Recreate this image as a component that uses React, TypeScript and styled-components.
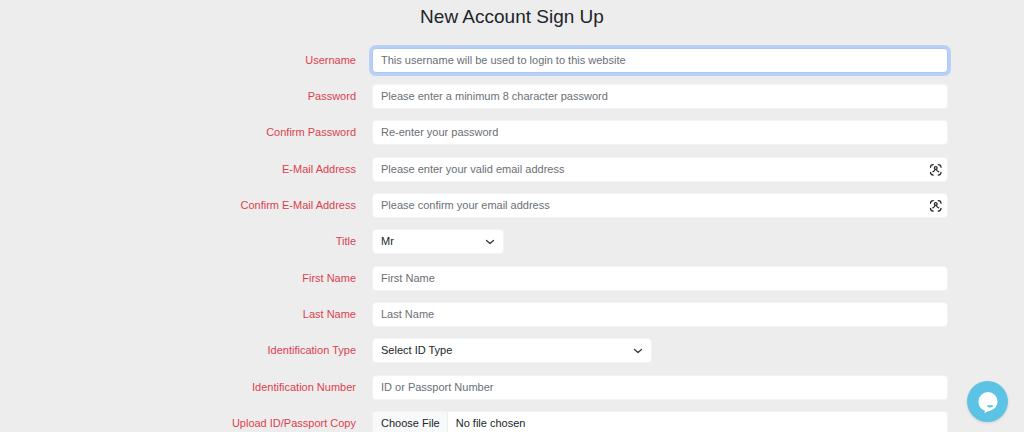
import React from "react";
import styled, { createGlobalStyle, css } from "styled-components";

const GlobalStyle = createGlobalStyle`
  *, *::before, *::after { box-sizing: border-box; }
  html { scrollbar-width: none; }
  body {
    margin: 0;
    background: #ededed;
    color: #212529;
    font-family: "Liberation Sans", Arial, sans-serif;
    font-size: 11px;
    line-height: 17px;
  }
`;

const Page = styled.main`
  max-width: 904px;
  margin: 0 auto;
  padding: 4px 8px 24px;
`;

const Heading = styled.h1`
  margin: 0 0 18px;
  font-size: 19px;
  font-weight: 400;
  line-height: 26px;
  text-align: center;
`;

const Form = styled.form`
  display: grid;
  gap: 12px;
`;

const Group = styled.div`
  display: grid;
  gap: 11px;
`;

const Row = styled.div`
  display: grid;
  grid-template-columns: 1fr 2fr;
  align-items: center;
`;

const Label = styled.label`
  padding: 0 8px;
  color: #dc3f4e;
  text-align: right;
`;

const Field = styled.div`
  display: flex;
  padding: 0 8px;
`;

const controlStyle = css`
  display: block;
  width: 100%;
  height: 25px;
  margin: 0;
  border: 1px solid #f2f3f4;
  border-radius: 4px;
  background: #fff;
  color: #212529;
  font: inherit;
`;

const TextInput = styled.input<{ $highlighted?: boolean }>`
  ${controlStyle}
  padding: 2px 8px 4px;
  outline: none;
  &::placeholder { color: #6a7076; opacity: 1; }
  ${(p) =>
    p.$highlighted &&
    css`
      border-color: #a9c8f5;
      box-shadow: 0 0 0 3px #b7d0f4;
    `}
`;

const FileInput = styled.input`
  ${controlStyle}
  padding: 3px 8px;
  overflow: hidden;
  &::file-selector-button {
    margin: -3px 8px -3px -8px;
    padding: 3px 7px 3px 8px;
    border: 0;
    border-right: 1px solid #eceef0;
    background: #f8f9fa;
    color: #212529;
    font: inherit;
  }
`;

const ControlWrap = styled.div<{ $width?: string }>`
  display: grid;
  align-items: center;
  width: ${(p) => p.$width ?? "100%"};
  & > * { grid-area: 1 / 1; }
  & > svg { justify-self: end; pointer-events: none; }
`;

const ChevronSvg = styled.svg`
  margin-right: 9px;
`;

const ContactSvg = styled.svg`
  margin-right: 6px;
`;

const Select = styled.select`
  ${controlStyle}
  appearance: none;
  padding: 3px 24px 3px 8px;
`;

const ChatButton = styled.button`
  position: fixed;
  right: 16px;
  bottom: 10px;
  width: 41px;
  height: 41px;
  padding: 0;
  border: 0;
  border-radius: 50%;
  background: #5cc3e4;
  box-shadow: 0 1px 3px rgba(0, 0, 0, 0.12);
  cursor: pointer;
  & > svg { display: block; }
`;

const Chevron = () => (
  <ChevronSvg width="10" height="10" viewBox="0 0 20 20" fill="none" stroke="#343a40" strokeWidth="2.6" strokeLinecap="round" strokeLinejoin="round" aria-hidden="true">
    <path d="m3 7 7 6 7-6" />
  </ChevronSvg>
);

const ContactIcon = () => (
  <ContactSvg width="13" height="13" viewBox="0 0 26 26" fill="none" stroke="#25282b" strokeWidth="2.5" strokeLinecap="round" strokeLinejoin="round" aria-hidden="true">
    <path d="M3 8.500A5.500 5.500 0 0 1 8.500 3M18.500 3A5.500 5.500 0 0 1 24 8.500M24 18.500a5.500 5.500 0 0 1-5.500 5.500M8.500 24A5.500 5.500 0 0 1 3 18.500" />
    <circle cx="13.500" cy="10" r="2.800" />
    <path d="M12 13c0 2.500-1 3.200-4.300 4.700M15 13c0 2.500 1 3.200 4.300 4.700" />
  </ContactSvg>
);

const ChatIcon = () => (
  <svg width="41" height="41" viewBox="0 0 41 41" aria-hidden="true">
    <path fill="#fff" d="M21 11a9.500 9.500 0 0 1 9.500 9.500c0 5-3.500 8.300-7.500 9.200-1.800.4-3.300 1-4.800 2-.5.300-.8.100-.7-.5l.3-1.600C14 28.500 11.500 25 11.500 20.500A9.500 9.500 0 0 1 21 11Z" />
    <path fill="#5cc3e4" d="M20 24.300h6.200c0 1.300-1.300 2.300-3.100 2.300S20 25.600 20 24.300Z" />
  </svg>
);

type Item = {
  id: string;
  label: string;
  kind?: "text" | "password" | "email" | "select" | "file";
  hint?: string;
  width?: string;
  highlighted?: boolean;
};

const groups: Item[][] = [
  [
    { id: "username", label: "Username", hint: "This username will be used to login to this website", highlighted: true },
    { id: "password", label: "Password", kind: "password", hint: "Please enter a minimum 8 character password" },
    { id: "password2", label: "Confirm Password", kind: "password", hint: "Re-enter your password" },
  ],
  [
    { id: "email", label: "E-Mail Address", kind: "email", hint: "Please enter your valid email address" },
    { id: "email2", label: "Confirm E-Mail Address", kind: "email", hint: "Please confirm your email address" },
    { id: "title", label: "Title", kind: "select", hint: "Mr", width: "calc(25% - 12px)" },
  ],
  [
    { id: "first", label: "First Name", hint: "First Name" },
    { id: "last", label: "Last Name", hint: "Last Name" },
    { id: "idtype", label: "Identification Type", kind: "select", hint: "Select ID Type", width: "calc(50% - 8px)" },
  ],
  [
    { id: "idnumber", label: "Identification Number", hint: "ID or Passport Number" },
    { id: "idcopy", label: "Upload ID/Passport Copy", kind: "file" },
  ],
];

function Control({ item }: { item: Item }) {
  const { id, kind = "text", hint, width, highlighted } = item;
  if (kind === "file") return <FileInput id={id} type="file" />;
  if (kind === "select")
    return (
      <ControlWrap $width={width}>
        <Select id={id}>
          <option>{hint}</option>
        </Select>
        <Chevron />
      </ControlWrap>
    );
  return (
    <ControlWrap>
      <TextInput id={id} type={kind} placeholder={hint} $highlighted={highlighted} />
      {kind === "email" && <ContactIcon />}
    </ControlWrap>
  );
}

export default function App() {
  return (
    <>
      <GlobalStyle />
      <Page>
        <Heading>New Account Sign Up</Heading>
        <Form>
          {groups.map((items) => (
            <Group key={items[0].id}>
              {items.map((item) => (
                <Row key={item.id}>
                  <Label htmlFor={item.id}>{item.label}</Label>
                  <Field>
                    <Control item={item} />
                  </Field>
                </Row>
              ))}
            </Group>
          ))}
        </Form>
      </Page>
      <ChatButton type="button" aria-label="Open chat">
        <ChatIcon />
      </ChatButton>
    </>
  );
}
